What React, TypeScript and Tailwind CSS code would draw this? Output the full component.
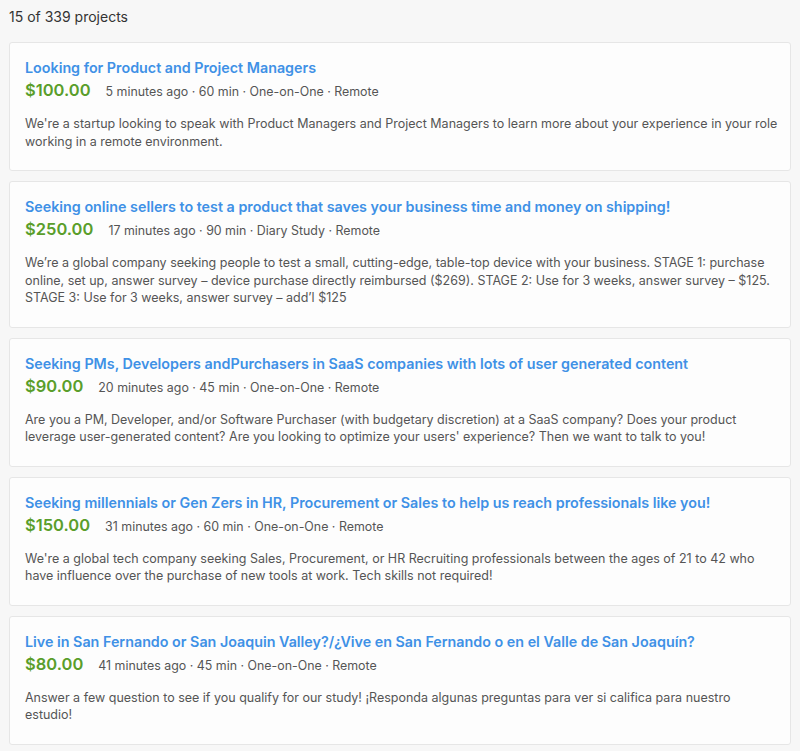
const projects = [
  {
    id: 1,
    title: 'Looking for Product and Project Managers',
    price: '$100.00',
    meta: ['5 minutes ago', '60 min', 'One-on-One', 'Remote'],
    description:
      "We're a startup looking to speak with Product Managers and Project Managers to learn more about your experience in your role working in a remote environment.",
  },
  {
    id: 2,
    title: 'Seeking online sellers to test a product that saves your business time and money on shipping!',
    price: '$250.00',
    meta: ['17 minutes ago', '90 min', 'Diary Study', 'Remote'],
    description:
      'We’re a global company seeking people to test a small, cutting-edge, table-top device with your business. STAGE 1: purchase online, set up, answer survey – device purchase directly reimbursed ($269). STAGE 2: Use for 3 weeks, answer survey – $125. STAGE 3: Use for 3 weeks, answer survey – add’l $125',
  },
  {
    id: 3,
    title: 'Seeking PMs, Developers andPurchasers in SaaS companies with lots of user generated content',
    price: '$90.00',
    meta: ['20 minutes ago', '45 min', 'One-on-One', 'Remote'],
    description:
      "Are you a PM, Developer, and/or Software Purchaser (with budgetary discretion) at a SaaS company? Does your product leverage user-generated content? Are you looking to optimize your users' experience? Then we want to talk to you!",
  },
  {
    id: 4,
    title: 'Seeking millennials or Gen Zers in HR, Procurement or Sales to help us reach professionals like you!',
    price: '$150.00',
    meta: ['31 minutes ago', '60 min', 'One-on-One', 'Remote'],
    description:
      "We're a global tech company seeking Sales, Procurement, or HR Recruiting professionals between the ages of 21 to 42 who have influence over the purchase of new tools at work. Tech skills not required!",
  },
  {
    id: 5,
    title: 'Live in San Fernando or San Joaquin Valley?/¿Vive en San Fernando o en el Valle de San Joaquín?',
    price: '$80.00',
    meta: ['41 minutes ago', '45 min', 'One-on-One', 'Remote'],
    description:
      'Answer a few question to see if you qualify for our study! ¡Responda algunas preguntas para ver si califica para nuestro estudio!',
  },
];

export default function App() {
  return (
    <div className="min-h-screen bg-[#f7f7f7] px-[9px] pt-[7px] pb-4 font-['Inter','Noto_Sans',sans-serif]">
      <p className="text-[14px] leading-[20px] text-[#333]">15 of 339 projects</p>
      <div className="mt-[15px] flex flex-col gap-[10px]">
        {projects.map((p) => (
          <div
            key={p.id}
            className="rounded-[3px] border border-[#e6e6e6] bg-[#fdfdfd] pl-[15px] pr-[10px] pt-[15px] pb-[20px]"
          >
            <a href="#" className="block text-[14.3px] leading-[20px] font-semibold text-[#3f91e6]">
              {p.title}
            </a>
            <div className="mt-[1px] flex items-baseline gap-[15px] leading-[22px]">
              <span className="text-[16.5px] font-semibold text-[#5a9e2b]">{p.price}</span>
              <span className="text-[12.4px] text-[#555]">{p.meta.join(' · ')}</span>
            </div>
            <p className="mt-3 text-[12.5px] leading-[17.5px] text-[#555]">{p.description}</p>
          </div>
        ))}
      </div>
    </div>
  );
}
